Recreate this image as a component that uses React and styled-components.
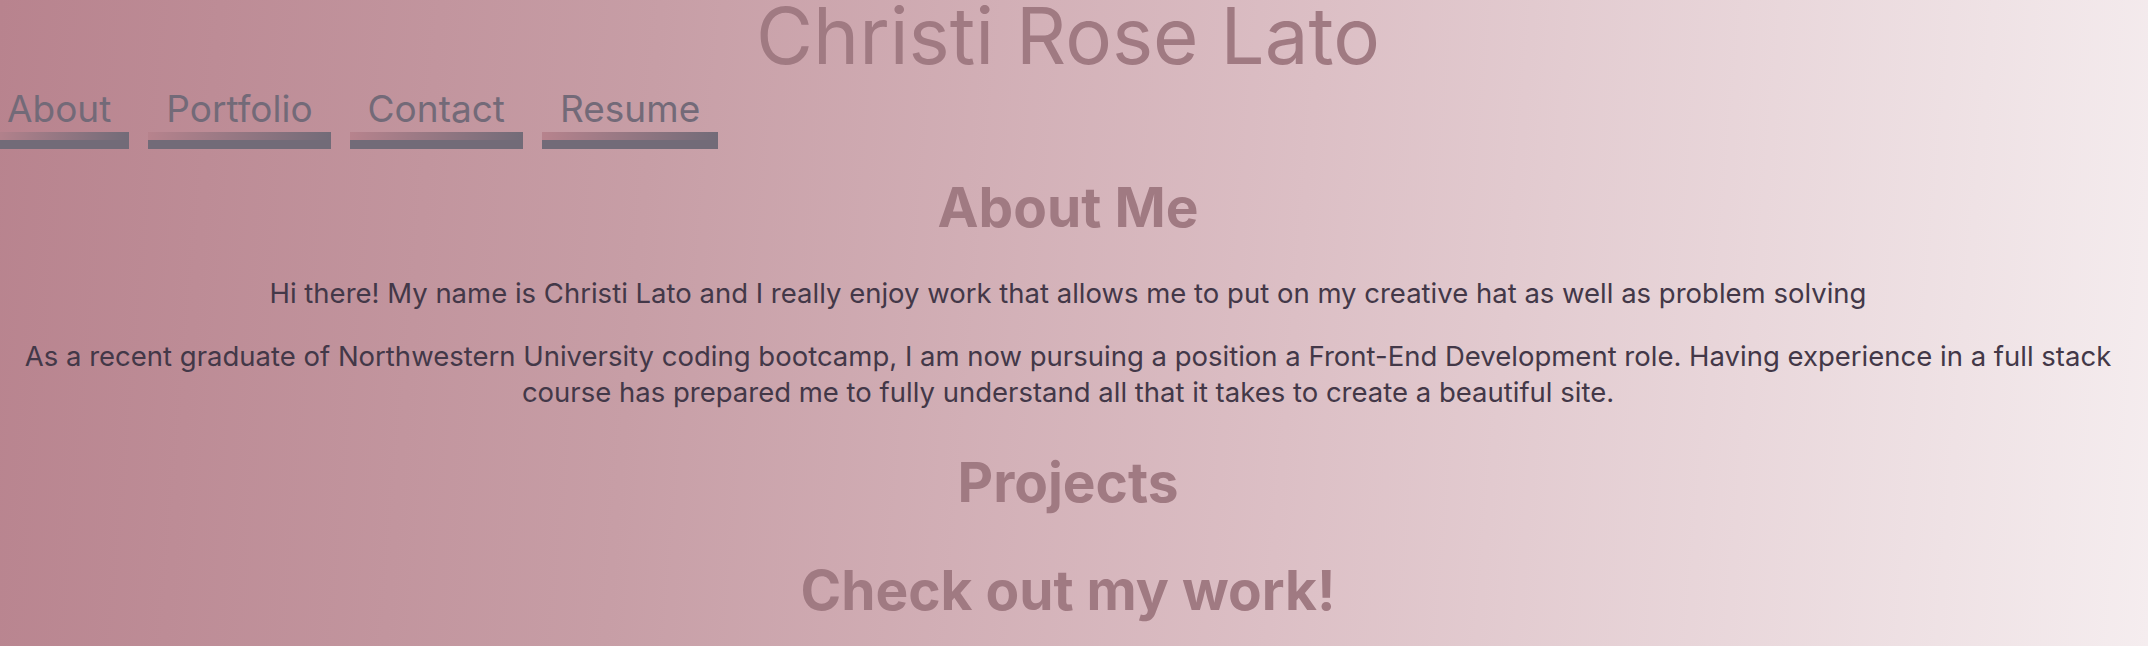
import styled, { createGlobalStyle } from "styled-components";

const GlobalStyle = createGlobalStyle`
    html, body {
        margin: 0;
        padding: 0;
    }
    body {
        min-height: 100vh;
        overflow: hidden;
        font-family: Inter, "Noto Sans", sans-serif;
        background: linear-gradient(95deg, #b8838e 0%, #c79ea6 30%, #dcbfc5 60%, #f5edef 100%);
    }
`;

const Page = styled.div`
    display: flex;
    flex-direction: column;
    min-height: 100vh;
    padding-right: 12px;
`;

const Title = styled.h1`
    margin: 0;
    font-size: 78px;
    font-weight: 400;
    line-height: 0.92;
    text-align: center;
    color: #a07a82;
`;

const Nav = styled.nav`
    display: flex;
    gap: 19px;
    margin: 18px 0 0 -11px;
`;

const NavItem = styled.a`
    display: flex;
    flex-direction: column;
    align-items: stretch;
    text-decoration: none;
    cursor: pointer;
`;

const NavLabel = styled.span`
    padding: 0 18px;
    font-size: 37px;
    line-height: 1;
    color: #736a78;
`;

const NavBar = styled.span`
    display: block;
    height: 17px;
    margin-top: 5px;
    background:
        linear-gradient(to right, #b7838d, #726b78) top / 100% 8px no-repeat,
        #726b78;
`;

const Section = styled.section`
    display: flex;
    flex-direction: column;
    align-items: center;
    text-align: center;
`;

const Heading = styled.h2`
    margin: ${({ $top }) => $top}px 0 0;
    font-size: 55px;
    font-weight: 700;
    line-height: 1.2;
    color: #a07a82;
`;

const Text = styled.p`
    margin: ${({ $top }) => $top}px 0 0;
    font-size: 27.5px;
    line-height: 36px;
    color: #433848;
`;

const App = () => {
    const links = ["About", "Portfolio", "Contact", "Resume"];

    return (
        <>
            <GlobalStyle />
            <Page>
                <Title>Christi Rose Lato</Title>
                <Nav>
                    {links.map((link) => (
                        <NavItem key={link}>
                            <NavLabel>{link}</NavLabel>
                            <NavBar />
                        </NavItem>
                    ))}
                </Nav>

                <Section>
                    <Heading $top={25}>About Me</Heading>
                    <Text $top={35}>
                        Hi there! My name is Christi Lato and I really enjoy work that
                        allows me to put on my creative hat as well as problem solving
                    </Text>
                    <Text $top={27}>
                        As a recent graduate of Northwestern University coding bootcamp, I
                        am now pursuing a position a Front-End Development role. Having
                        experience in a full stack course has prepared me to fully
                        understand all that it takes to create a beautiful site.
                    </Text>
                </Section>

                <Section>
                    <Heading $top={39}>Projects</Heading>
                    <Heading $top={42}>Check out my work!</Heading>
                </Section>
            </Page>
        </>
    );
};

export default App;
